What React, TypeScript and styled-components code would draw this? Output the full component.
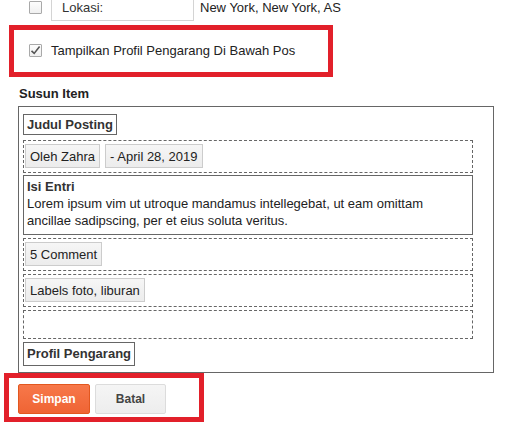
import React from "react";
import styled, { createGlobalStyle } from "styled-components";

const GlobalStyle = createGlobalStyle`
  html, body {
    margin: 0;
    padding: 0;
    background: #fff;
    overflow: hidden;
  }
  body {
    font-family: "Liberation Sans", Arial, sans-serif;
    font-size: 13px;
    color: #222;
  }
`;

const Page = styled.div`
  width: 505px;
  height: 427px;
  overflow: hidden;
`;

const TopRow = styled.div`
  display: flex;
  align-items: center;
  height: 27px;
  margin-top: -6px;
  padding-left: 29px;
`;

const Box = styled.span`
  display: inline-flex;
  align-items: center;
  justify-content: center;
  width: 13px;
  height: 13px;
  box-sizing: border-box;
  border: 1px solid #a9a9a9;
  border-radius: 1px;
  background: linear-gradient(#fdfdfd, #f0f0f0);
  flex-shrink: 0;
`;

const LocInput = styled.div`
  display: flex;
  align-items: center;
  width: 143px;
  height: 27px;
  box-sizing: border-box;
  margin-left: 9px;
  padding-left: 10px;
  border: 1px solid #d4d4d4;
  color: #333;
`;

const LocValue = styled.span`
  margin-left: 6px;
  color: #222;
`;

const Highlight = styled.div<{ $w: number; $h: number; $ml: number }>`
  box-sizing: border-box;
  width: ${(p) => p.$w}px;
  height: ${(p) => p.$h}px;
  margin-left: ${(p) => p.$ml}px;
  border: 5px solid #e2202a;
`;

const OptionRow = styled(Highlight)`
  display: flex;
  align-items: center;
  gap: 9px;
  margin-top: 4px;
  padding-left: 15px;
  padding-bottom: 1px;
  color: #222;
`;

const SectionTitle = styled.div`
  margin: 9px 0 0 19px;
  font-weight: bold;
  line-height: 16px;
  color: #222;
`;

const Layout = styled.div`
  box-sizing: border-box;
  width: 476px;
  margin: 4px 0 0 18px;
  padding: 7px 20px 6px 4px;
  border: 1px solid #666;
  display: flex;
  flex-direction: column;
  gap: 3px;
`;

const Widget = styled.div<{ $pad: number; $lh: number }>`
  align-self: flex-start;
  border: 1px solid #666;
  padding: ${(p) => p.$pad}px 3px;
  font-weight: bold;
  color: #333;
  line-height: ${(p) => p.$lh}px;
`;

const Slot = styled.div`
  display: flex;
  gap: 5px;
  min-height: 20px;
  padding: 3px 1px 4px;
  border: 1px dashed #666;
`;

const Chip = styled.span`
  display: inline-flex;
  align-items: center;
  height: 24px;
  box-sizing: border-box;
  padding: 0 4px;
  border: 1px solid #ccc;
  background: linear-gradient(#f6f6f6, #ececec);
  color: #222;
`;

const Entry = styled.div`
  border: 1px solid #666;
  padding: 2px 3px 5px;
  line-height: 17px;
  margin: -1px 0 0;
`;

const EntryTitle = styled.div`
  font-weight: bold;
  color: #333;
`;

const Actions = styled(Highlight)`
  display: flex;
  gap: 5px;
  padding: 6px 0 0 9px;
`;

const Button = styled.button<{ $primary?: boolean }>`
  width: ${(p) => (p.$primary ? 72 : 71)}px;
  height: 30px;
  border-radius: 2px;
  font-family: "Liberation Sans", Arial, sans-serif;
  font-size: 12px;
  font-weight: bold;
  cursor: pointer;
  border: 1px solid ${(p) => (p.$primary ? "#e2571f" : "#dcdcdc")};
  color: ${(p) => (p.$primary ? "#fff" : "#444")};
  background: ${(p) =>
    p.$primary
      ? "linear-gradient(#f7784a, #ef6434)"
      : "linear-gradient(#f5f5f5, #ededed)"};
`;

const Check = () => (
  <svg width="11" height="11" viewBox="0 0 11 11">
    <path d="M1.5 5.8 L4.2 8.4 L9.6 1.6" fill="none" stroke="#555" strokeWidth="1.6" />
  </svg>
);

export default function App() {
  return (
    <Page>
      <GlobalStyle />
      <TopRow>
        <Box />
        <LocInput>Lokasi:</LocInput>
        <LocValue>New York, New York, AS</LocValue>
      </TopRow>

      <OptionRow $w={324} $h={52} $ml={9}>
        <Box>
          <Check />
        </Box>
        <span>Tampilkan Profil Pengarang Di Bawah Pos</span>
      </OptionRow>

      <SectionTitle>Susun Item</SectionTitle>
      <Layout>
        <Widget $pad={1} $lh={17} style={{ marginBottom: 2 }}>
          Judul Posting
        </Widget>
        <Slot>
          <Chip>Oleh Zahra</Chip>
          <Chip>- April 28, 2019</Chip>
        </Slot>
        <Entry>
          <EntryTitle>Isi Entri</EntryTitle>
          Lorem ipsum vim ut utroque mandamus intellegebat, ut eam omittam
          ancillae sadipscing, per et eius soluta veritus.
        </Entry>
        <Slot>
          <Chip>5 Comment</Chip>
        </Slot>
        <Slot>
          <Chip>Labels foto, liburan</Chip>
        </Slot>
        <Slot />
        <Widget $pad={2} $lh={18}>
          Profil Pengarang
        </Widget>
      </Layout>

      <Actions $w={200} $h={49} $ml={4}>
        <Button $primary>Simpan</Button>
        <Button>Batal</Button>
      </Actions>
    </Page>
  );
}
